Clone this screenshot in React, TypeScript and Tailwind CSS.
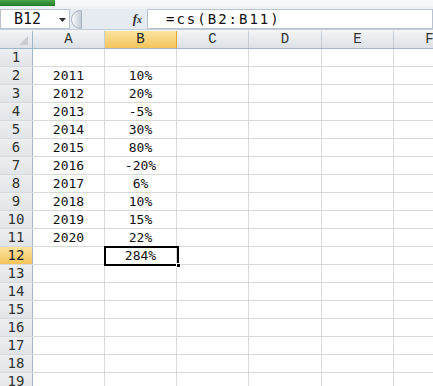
import React from "react";

const cols = ["A", "B", "C", "D", "E", "F"];
const colW = [72, 72, 72, 73, 72, 72];
const data: Record<number, [string, string]> = {
  2: ["2011", "10%"],
  3: ["2012", "20%"],
  4: ["2013", "-5%"],
  5: ["2014", "30%"],
  6: ["2015", "80%"],
  7: ["2016", "-20%"],
  8: ["2017", "6%"],
  9: ["2018", "10%"],
  10: ["2019", "15%"],
  11: ["2020", "22%"],
  12: ["", "284%"],
};

const mono = { fontFamily: '"DejaVu Sans Mono", "Liberation Mono", monospace' };
const serifMono = { fontFamily: '"Liberation Mono", "DejaVu Sans Mono", monospace' };

export default function App() {
  const rows = Array.from({ length: 19 }, (_, i) => i + 1);
  return (
    <div className="w-[433px] h-[386px] overflow-hidden bg-white relative">
      {/* top strip */}
      <div className="h-[9px] flex bg-[#eef2f7]">
        <div className="w-[55px] h-[6px] bg-gradient-to-b from-[#4aa64a] to-[#257a2a]" />
        <div className="flex-1 h-[6px] bg-[#f5f7fa]" />
      </div>
      {/* formula bar */}
      <div className="h-[21px] flex items-stretch bg-[#e6ebf2] border-b border-[#c5cdd8]">
        <div className="w-[70px] bg-white border border-[#b9c3d0] flex items-center relative">
          <span className="ml-[13px] text-[15px] text-[#111] leading-none" style={mono}>B12</span>
          <svg className="absolute left-[58px] top-[8px]" width="7" height="4" viewBox="0 0 7 4">
            <path d="M0 0 L7 0 L3.5 4 Z" fill="#333" />
          </svg>
        </div>
        <div className="w-[12px] flex items-center justify-start">
          <div className="w-[11px] h-[19px] rounded-l-full bg-gradient-to-r from-[#fafbfc] to-[#c3cbd6] border border-[#a9b3bf] ml-[1px]" />
        </div>
        <div className="w-[65px] flex items-center justify-end pr-[5px]">
          <span className="text-[13px] italic font-bold text-[#333]" style={{ fontFamily: '"Liberation Serif", serif' }}>
            f<span className="text-[10px]">x</span>
          </span>
        </div>
        <div className="flex-1 bg-white border border-[#b9c3d0] flex items-center">
          <span className="ml-[18px] text-[14px] text-[#111] leading-none tracking-[2px]" style={mono}>=cs(B2:B11)</span>
        </div>
      </div>
      <div className="h-[1px] bg-[#f2f4f7]" />
      {/* column header */}
      <div className="h-[18px] flex border-b border-[#9eb6ce] bg-gradient-to-b from-[#f3f4f6] to-[#dde1e6]">
        <div className="w-[33px] shrink-0 border-r border-[#9eb6ce] relative">
          <svg className="absolute right-[4px] bottom-[3px]" width="9" height="9" viewBox="0 0 9 9">
            <path d="M9 0 L9 9 L0 9 Z" fill="#c9cdd2" />
          </svg>
        </div>
        {cols.map((c, i) => (
          <div
            key={c}
            className={
              "shrink-0 flex items-center justify-center text-[14px] border-r " +
              (c === "B"
                ? "bg-gradient-to-b from-[#fbe39f] to-[#f3c459] border-[#e2a53a] text-[#222]"
                : "border-[#c8ced6] text-[#333]")
            }
            style={{ width: colW[i], ...serifMono }}
          >
            {c}
          </div>
        ))}
      </div>
      {/* rows */}
      {rows.map((r) => (
        <div key={r} className="h-[18px] flex border-b border-[#d9d9d9]">
          <div
            className={
              "w-[33px] shrink-0 flex items-center justify-center text-[14px] border-r border-[#9eb6ce] " +
              (r === 12
                ? "bg-gradient-to-b from-[#fbe39f] to-[#f3c459] text-[#222]"
                : "bg-gradient-to-b from-[#eceef1] to-[#e2e5e9] text-[#333]")
            }
            style={mono}
          >
            {r}
          </div>
          {cols.map((c, i) => {
            const v = data[r] ? (c === "A" ? data[r][0] : c === "B" ? data[r][1] : "") : "";
            return (
              <div
                key={c}
                className="shrink-0 flex items-center justify-center text-[13px] text-[#111] border-r border-[#d9d9d9]"
                style={{ width: colW[i], ...mono }}
              >
                {v}
              </div>
            );
          })}
        </div>
      ))}
      {/* selection box */}
      <div className="absolute left-[104px] top-[246px] w-[75px] h-[20px] border-2 border-black pointer-events-none">
        <div className="absolute -right-[4px] -bottom-[4px] w-[5px] h-[5px] bg-black border border-white" />
      </div>
    </div>
  );
}
